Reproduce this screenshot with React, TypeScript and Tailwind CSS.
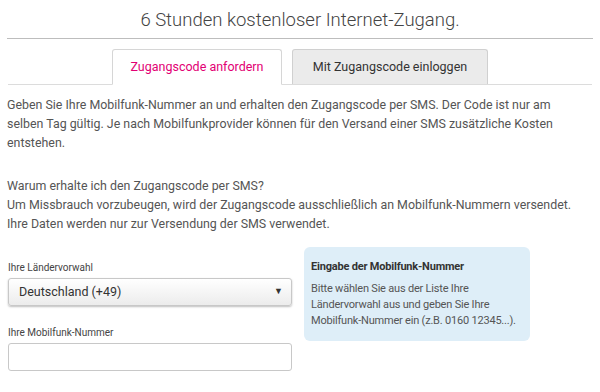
const font = {
    fontFamily: 'Roboto, "Liberation Sans", sans-serif',
};

function Tabs() {
    return (
        <div className="mx-[8px] mt-[10px] flex justify-center gap-[10px] border-b border-[#dcdcdc]">
            <div className="-mb-px flex h-[36px] w-[170px] items-center justify-center rounded-t-[3px] border border-b-white border-[#d6d6d6] bg-white text-[12.5px] text-[#e20074]">
                Zugangscode anfordern
            </div>
            <div className="flex h-[35px] w-[196px] items-center justify-center rounded-t-[3px] border border-b-0 border-[#d0d0d0] bg-[#ebebeb] text-[12.5px] text-[#333]">
                Mit Zugangscode einloggen
            </div>
        </div>
    );
}

export default function App() {
    return (
        <div className="h-[392px] w-[600px] overflow-hidden bg-white text-[#555]" style={font}>
            <div className="mx-[7px] border-b border-[#bdbdbd] pt-[8px] pb-[5px] text-center text-[18.5px] font-light leading-[25px] text-[#444]">
                6 Stunden kostenloser Internet-Zugang.
            </div>

            <Tabs />

            <div className="px-[7px] pt-[10px] text-[12.4px] leading-[19px]">
                <p>
                    Geben Sie Ihre Mobilfunk-Nummer an und erhalten den Zugangscode per SMS. Der Code ist nur am
                    <br />
                    selben Tag gültig. Je nach Mobilfunkprovider können für den Versand einer SMS zusätzliche Kosten
                    <br />
                    entstehen.
                </p>
                <p className="mt-[24px]">
                    Warum erhalte ich den Zugangscode per SMS?
                    <br />
                    Um Missbrauch vorzubeugen, wird der Zugangscode ausschließlich an Mobilfunk-Nummern versendet.
                    <br />
                    Ihre Daten werden nur zur Versendung der SMS verwendet.
                </p>
            </div>

            <div className="mt-[14px] flex gap-[12px] px-[8px]">
                <div className="w-[284px] pt-[14px]">
                    <label className="block text-[10px] leading-[14px] text-[#444]">Ihre Ländervorwahl</label>
                    <div className="mt-[3px] flex h-[28px] items-center justify-between rounded-[3px] border border-[#c8c8c8] bg-gradient-to-b from-white to-[#ececec] pr-[8px] pl-[10px] shadow-[0_1px_2px_rgba(0,0,0,0.25)]">
                        <span className="text-[12.5px] text-[#333]">Deutschland (+49)</span>
                        <span className="text-[9px] text-[#333]">▼</span>
                    </div>

                    <label className="mt-[20px] block text-[10px] leading-[14px] text-[#444]">Ihre Mobilfunk-Nummer</label>
                    <div className="mt-[3px] h-[28px] rounded-[3px] border border-[#c8c8c8] bg-white" />
                </div>

                <div className="h-[94px] w-[226px] rounded-[6px] bg-[#deeef8] px-[7px] pt-[12px] text-[11px] leading-[16px] tracking-[-0.2px]">
                    <div className="font-bold text-[#333]">Eingabe der Mobilfunk-Nummer</div>
                    <div className="mt-[6px] text-[#555]">
                        Bitte wählen Sie aus der Liste Ihre
                        <br />
                        Ländervorwahl aus und geben Sie Ihre
                        <br />
                        Mobilfunk-Nummer ein (z.B. 0160 12345...).
                    </div>
                </div>
            </div>
        </div>
    );
}
